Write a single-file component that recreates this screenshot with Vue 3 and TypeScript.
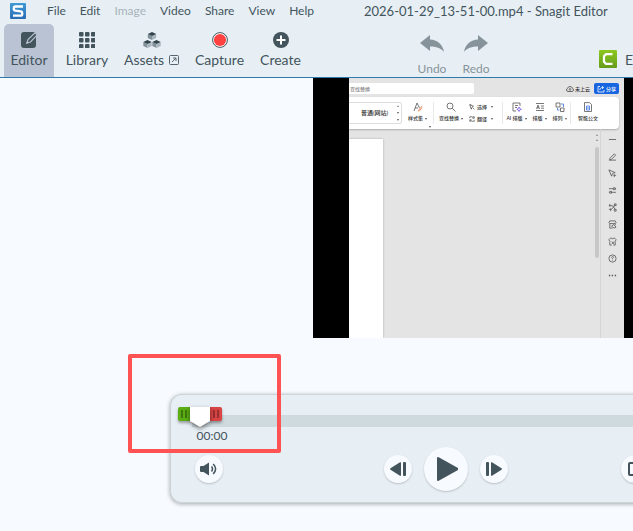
<script setup lang="ts">
import { ref } from 'vue'

interface MenuEntry { label: string; disabled?: boolean }

const menus: MenuEntry[] = [
  { label: 'File' }, { label: 'Edit' }, { label: 'Image', disabled: true },
  { label: 'Video' }, { label: 'Share' }, { label: 'View' }, { label: 'Help' },
]

const position = ref(0)

const sideIcons: string[] = [
  'M1 5h8',
  'M1 9h8M2 7l5-5 1.500 1.500-5 5H2z',
  'M1 1l7 3-3 1-1 3zM6 7h3M7 6v3',
  'M1 3h5M8 3h1M1 7h1M4 7h5M6 2h2v2H6zM2 6h2v2H2z',
  'M1 3h4l3 4M1 7h3l4-5M7 1h2v2H7zM7 7h2v2H7zM2 1v3M3 6v3',
  'M1 3l1-2h6l1 2-1 1H2zM2 4v5h3M4 7l2-2 3 3-2 1zM8 4v2',
  'M3 1l2 1 2-1 2 2-1 2v4H6M4 9H2V5L1 3l2-2M4 5l3 3M7 5L4 8',
  'M5 1a4 4 0 1 0 0 8a4 4 0 1 0 0-8M4 4c0-2 3-1 2 0L5 5v1M5 7v.5',
  'M1 5h1.500M4.200 5h1.500M7.500 5h1.500',
]
</script>

<template>
  <div class="app">
    <header class="header">
      <div class="menu-row">
        <svg class="logo" viewBox="0 0 16 16" aria-hidden="true">
          <defs>
            <linearGradient id="logoFill" x1="0" y1="0" x2="0" y2="1">
              <stop offset="0" stop-color="#3f9bd6" /><stop offset="1" stop-color="#2b6cb3" />
            </linearGradient>
          </defs>
          <rect width="16" height="16" rx="1" fill="url(#logoFill)" />
          <path d="M13 3.500H5.500Q3.800 3.500 3.800 5.200V6Q3.800 7.500 5.500 7.700L10.500 8.300Q12.200 8.500 12.200 10V11Q12.200 12.700 10.500 12.700H3" fill="none" stroke="#fff" stroke-width="2.300" />
        </svg>
        <nav class="menus" aria-label="Main menu">
          <button v-for="m in menus" :key="m.label" class="menu" :disabled="m.disabled">{{ m.label }}</button>
        </nav>
        <h1 class="title">2026-01-29_13-51-00.mp4 - Snagit Editor</h1>
      </div>

      <div class="tool-row">
        <div class="tabs">
          <button class="tab active">
            <svg width="18" height="16" viewBox="0 0 18 16" aria-hidden="true">
              <rect x="1" y="0" width="15" height="16" rx="3" fill="#43545c" />
              <path d="M7 11l1-3.500L15 .8l2.200 2L10.500 10z" fill="#43545c" stroke="#b9c3d3" stroke-width="1.200" />
              <path d="M6 12l1-2.500 1.600 1.600z" fill="#b9c3d3" />
            </svg>
            <span>Editor</span>
          </button>
          <button class="tab">
            <svg width="16" height="16" viewBox="0 0 16 16" fill="#43545c" aria-hidden="true">
              <template v-for="r in 3" :key="r">
                <rect v-for="c in 3" :key="c" :x="(c - 1) * 6" :y="(r - 1) * 6" width="4.500" height="4.500" rx="1" />
              </template>
            </svg>
            <span>Library</span>
          </button>
          <button class="tab">
            <svg width="18" height="16" viewBox="0 0 18 16" aria-hidden="true">
              <g v-for="p in [[4.5, 0], [0, 8], [9, 8]]" :key="p.join()" :transform="`translate(${p[0]} ${p[1]})`">
                <path d="M.3 2L4.500 4v4L.3 6z" fill="#82909a" />
                <path d="M8.700 2L4.500 4v4l4.200-2z" fill="#aab4bd" />
                <path d="M.3 2L4.500 0l4.200 2-4.200 2z" fill="#34454d" />
              </g>
            </svg>
            <span class="with-link">Assets
              <svg width="10" height="10" viewBox="0 0 10 10" fill="none" stroke="#56656d" aria-hidden="true">
                <rect x=".5" y=".5" width="9" height="9" rx="1" /><path d="M3 7l4-4M4 3h3v3" />
              </svg>
            </span>
          </button>
          <button class="tab">
            <svg width="16" height="16" viewBox="0 0 16 16" aria-hidden="true">
              <circle cx="8" cy="8" r="7.400" fill="#fff" stroke="#43545c" stroke-width="1" /><circle cx="8" cy="8" r="6.100" fill="#ff4141" />
            </svg>
            <span>Capture</span>
          </button>
          <button class="tab">
            <svg width="16" height="16" viewBox="0 0 16 16" aria-hidden="true">
              <circle cx="8" cy="8" r="8" fill="#43545c" /><path d="M8 3.500v9M3.500 8h9" stroke="#fff" stroke-width="2" />
            </svg>
            <span>Create</span>
          </button>
        </div>
        <div class="history">
          <button class="hist">
            <svg width="24" height="18" viewBox="0 0 24 18" aria-hidden="true">
              <path d="M0 8L10 0v4.500c7 0 13 5 14 12.500-3-4-8-5.500-14-5.500V16z" fill="#87939a" />
            </svg>
            <span>Undo</span>
          </button>
          <button class="hist">
            <svg width="24" height="18" viewBox="0 0 24 18" aria-hidden="true">
              <path d="M24 8L14 0v4.500C7 4.500 1 9.500 0 17c3-4 8-5.500 14-5.500V16z" fill="#87939a" />
            </svg>
            <span>Redo</span>
          </button>
        </div>
        <button class="external">
          <svg width="18" height="18" viewBox="0 0 18 18" aria-hidden="true">
            <defs>
              <linearGradient id="greenFill" x1="0" y1="0" x2="0" y2="1">
                <stop offset="0" stop-color="#8cc820" /><stop offset="1" stop-color="#669c1b" />
              </linearGradient>
            </defs>
            <rect width="18" height="18" rx="1" fill="url(#greenFill)" />
            <path d="M13.500 4.200H7L5 6.200v5.600l2 2h6.500" fill="none" stroke="#fff" stroke-width="2.200" />
          </svg>
          <span>E</span>
        </button>
      </div>
    </header>

    <main class="workspace">
      <section class="video" aria-label="Video preview">
        <div class="doc">
          <div class="doc-top">
            <input class="doc-search" type="text" placeholder="查找替换" aria-label="查找替换" />
            <div class="doc-account">
              <span class="cloud">
                <svg width="8" height="8" viewBox="0 0 8 8" fill="none" stroke="#333" stroke-width=".7" aria-hidden="true">
                  <path d="M2 6.500A1.700 1.700 0 0 1 1.700 3.200 2.400 2.400 0 0 1 6.300 3.200 1.700 1.700 0 0 1 6 6.500zM4 6V3.500M3 4.500l1-1 1 1" />
                </svg>未上云
              </span>
              <button class="share">
                <svg width="8" height="8" viewBox="0 0 8 8" fill="none" stroke="#fff" stroke-width=".8" aria-hidden="true">
                  <path d="M3 1.500H1v5.500h6V5M2.800 5C3 3 4 2.500 6 2.500M5 1l1.700 1.500L5 4" />
                </svg>分享
              </button>
            </div>
          </div>

          <div class="ribbon">
            <div class="gallery">
              <span>普通(网站)</span>
              <div class="spin"><i class="up"></i><i></i><i></i></div>
            </div>
            <button class="rib c-style">
              <svg width="10" height="10" viewBox="0 0 10 10" fill="none" stroke="#555" stroke-width=".8" aria-hidden="true">
                <path d="M1 9l3-8 2.500 5M2.200 6H5" /><path d="M5 9l4-5M6 9.500l3-4" stroke="#e07a4c" />
              </svg>
              <span>样式集<i></i></span>
              <i class="launcher"></i>
            </button>
            <button class="rib c-find">
              <svg width="10" height="10" viewBox="0 0 10 10" fill="none" stroke="#555" stroke-width=".8" aria-hidden="true">
                <circle cx="4" cy="4" r="3" /><path d="M6.200 6.200L9.500 9.500" />
              </svg>
              <span>查找替换<i></i></span>
            </button>
            <div class="rib-stack">
              <button class="rib-line">
                <svg width="6" height="6" viewBox="0 0 8 8" fill="none" stroke="#444" stroke-width=".9" aria-hidden="true"><path d="M1 1h2M1 1l5 2-2 1-1 3zM5 5l2 2" /></svg>选择<i></i>
              </button>
              <button class="rib-line">
                <svg width="6" height="6" viewBox="0 0 8 8" fill="none" stroke="#444" stroke-width=".9" aria-hidden="true"><path d="M1 3V1h3M7 5v2H4M5 1h2v2H5zM1 5h2v2H1z" /></svg>翻译<i></i>
              </button>
            </div>
            <button class="rib c-ai">
              <svg width="10" height="10" viewBox="0 0 10 10" fill="none" stroke="#555" stroke-width=".8" aria-hidden="true">
                <path d="M4 9H1V1h7v3M3 3.500h3M3 5.500h2" /><path d="M7 5l.7 1.700 1.700.6-1.700.7L7 9.500l-.7-1.500-1.500-.7 1.500-.6z" stroke="#7656e8" />
              </svg>
              <span>AI 排版<i></i></span>
            </button>
            <button class="rib c-layout">
              <svg width="10" height="10" viewBox="0 0 10 10" fill="none" stroke="#555" stroke-width=".8" aria-hidden="true">
                <path d="M1 1.500h8M1 8.500h8M1.500 7l1.500-4 1.500 4M2 5.800h2M6 4h3M6 6.200h3" />
              </svg>
              <span>排版<i></i></span>
            </button>
            <button class="rib c-arrange">
              <svg width="10" height="10" viewBox="0 0 10 10" fill="none" stroke="#555" stroke-width=".8" aria-hidden="true">
                <path d="M1 1h4v4H1zM5.500 6H9v3.500H5.500z" /><path d="M6 2h2.500v3M4.500 8H2.500V6" stroke="#3f6fe0" />
              </svg>
              <span>排列<i></i></span>
            </button>
            <button class="rib c-gov">
              <svg width="10" height="10" viewBox="0 0 10 10" fill="none" stroke="#555" stroke-width=".8" aria-hidden="true">
                <path d="M1.500.6h5L8.500 2.500v7h-7z" /><path d="M3.500 4h3v4h-3zM3.500 6h3" stroke="#3f6fe0" />
              </svg>
              <span>智能公文</span>
            </button>
          </div>

          <div class="doc-body">
            <div class="page"></div>
            <div class="scroll">
              <i class="up"></i><i class="up"></i>
              <div class="scroll-thumb"></div>
            </div>
            <aside class="side">
              <svg v-for="(d, i) in sideIcons" :key="i" width="9" height="9" viewBox="0 0 10 10" fill="none" stroke="#555" :stroke-width="i === 8 ? 1.6 : 0.9" aria-hidden="true">
                <path :d="d" />
              </svg>
            </aside>
          </div>
        </div>
      </section>

      <section class="player" aria-label="Playback controls">
        <div class="timeline">
          <button class="trim start" aria-label="Trim start"><i></i><i></i></button>
          <button class="trim end" aria-label="Trim end"><i></i><i></i></button>
          <input v-model.number="position" class="seek" type="range" min="0" max="100" aria-label="Playback position" />
        </div>
        <div class="time">00:00</div>
        <div class="controls">
          <button class="round" aria-label="Volume">
            <svg width="18" height="14" viewBox="0 0 18 14" aria-hidden="true">
              <path d="M1 4Q0 4 0 5v4q0 1 1 1h2.500L9 13.500V.5L3.500 4z" fill="#43545c" />
              <path d="M11.500 4.500Q13.500 7 11.500 9.500M13.200 2Q18 7 13.200 12" fill="none" stroke="#43545c" stroke-width="1.500" />
            </svg>
          </button>
          <div class="transport">
            <button class="round" aria-label="Previous frame">
              <svg width="16" height="14" viewBox="0 0 16 14" fill="#43545c" aria-hidden="true"><path d="M11 .8v12.400q0 .8-1 .5L.5 7.700q-.8-.7 0-1.400L10 .3q1-.4 1 .5z" /><rect x="13" width="3" height="14" rx="1" /></svg>
            </button>
            <button class="round play" aria-label="Play">
              <svg width="24" height="26" viewBox="0 0 24 26" fill="#43545c" aria-hidden="true"><path d="M3 2.200Q3 .4 4.700 1.200L24 12q1 1 0 2L4.700 24.800Q3 25.600 3 23.800z" /></svg>
            </button>
            <button class="round" aria-label="Next frame">
              <svg width="16" height="14" viewBox="0 0 16 14" fill="#43545c" aria-hidden="true"><rect width="3" height="14" rx="1" /><path d="M5 .8v12.400q0 .8 1 .5l9.500-6q.8-.7 0-1.400L6 .3Q5 -.1 5 .8z" /></svg>
            </button>
          </div>
          <button class="round extra" aria-label="Fit view">
            <svg width="14" height="14" viewBox="0 0 14 14" aria-hidden="true"><rect x="1" y="1" width="12" height="12" rx="1" fill="none" stroke="#43545c" stroke-width="2" /></svg>
          </button>
        </div>
      </section>

      <div class="highlight" aria-hidden="true"></div>
    </main>
  </div>
</template>

<style>
body { background: #f7fbff; }
</style>

<style scoped>
.app {
  position: relative;
  min-height: 100vh;
  overflow: hidden;
  background: #f7fbff;
  color: #43545c;
  font-family: Lato, "Noto Sans CJK SC", sans-serif;
}
button {
  border: 0;
  padding: 0;
  background: none;
  color: inherit;
  font: inherit;
  white-space: nowrap;
}
svg { display: block; flex: none; }
.header { background: #e7eff5; border-bottom: 1px solid #2d7baa; }
.menu-row { display: flex; align-items: center; height: 22px; padding: 0 10px; }
.logo { width: 16px; height: 16px; }
.menus { display: flex; gap: 14px; margin-left: 21px; font-size: 12px; line-height: 22px; }
.menu:disabled { color: #a9b3ba; }
.title { margin: 0 0 0 50px; font-size: 13px; font-weight: 400; line-height: 20px; white-space: nowrap; }
.tool-row { display: flex; height: 53px; margin-top: 2px; padding-left: 4px; }
.tabs { display: grid; grid-template-columns: 54px 58px 71px 65px 57px; }
.tab { display: flex; flex-direction: column; align-items: center; gap: 2px; padding-top: 8px; font-size: 14px; line-height: 20px; }
.tab.active { width: 50px; background: #b9c3d3; border-radius: 5px 5px 0 0; }
.with-link { display: flex; align-items: center; gap: 5px; }
.history { display: flex; margin-left: 101px; }
.hist { display: flex; flex-direction: column; align-items: center; width: 44px; gap: 7px; padding-top: 11px; font-size: 12px; line-height: 18px; color: #87939a; }
.external { display: flex; align-items: center; gap: 8px; margin-left: 101px; padding-top: 17px; font-size: 14px; }

.workspace { position: relative; }
.video { height: 260px; margin-left: 313px; padding: 0 9px 0 36px; background: #000; }
.doc { display: flex; flex-direction: column; height: 100%; overflow: hidden; background: #e4e4e4; color: #333; font-size: 5px; font-weight: 500; line-height: 8px; }
.doc-top { display: flex; justify-content: space-between; align-items: center; padding: 5px 5px 3px 0; }
.doc-search { width: 125px; height: 11px; box-sizing: border-box; border: 0; border-radius: 0 2px 2px 0; padding: 0 1px; background: #fff; font: inherit; }
.doc-search::placeholder { color: #888; }
.doc-account { display: flex; align-items: center; gap: 4px; }
.cloud, .share { display: flex; align-items: center; gap: 1px; }
.share { height: 11px; padding: 0 3px; border-radius: 2px; background: #1765e0; color: #fff; }
.ribbon {
  display: grid;
  grid-template-columns: 53px 31px 35px 34px 28px 19px 21px 35px;
  align-items: center;
  height: 32px;
  margin-right: 5px;
  border-radius: 0 4px 4px 0;
  background: #fff;
  box-shadow: 0 1px 2px #aaa;
}
.gallery { display: flex; align-items: center; justify-content: space-between; height: 20px; padding: 0 2px 0 12px; border: 1px solid #ddd; border-left: 0; border-radius: 0 3px 3px 0; font-size: 6px; }
.spin { display: flex; flex-direction: column; gap: 5px; }
i { display: inline-block; flex: none; border: 1px solid transparent; border-top: 2px solid #555; border-bottom: 0; margin-left: 2px; vertical-align: middle; }
i.up { border-top: 0; border-bottom: 2px solid #888; }
.rib { position: relative; display: flex; flex-direction: column; align-items: center; gap: 2px; padding-bottom: 2px; }
.launcher { position: absolute; right: 2px; bottom: -4px; }
.c-find, .c-ai, .c-gov { border-left: 1px solid #e8e8e8; }
.rib-stack { display: flex; flex-direction: column; gap: 4px; padding: 0 0 1px 1px; }
.rib-line { display: flex; align-items: center; gap: 2px; }
.doc-body { display: flex; flex: 1; }
.page { width: 34px; margin-top: 10px; background: #fff; box-shadow: 0 0 2px #aaa; }
.scroll { display: flex; flex-direction: column; align-items: center; gap: 3px; width: 7px; margin-left: auto; padding-top: 5px; }
.scroll i { margin: 0; }
.scroll-thumb { width: 4px; height: 111px; margin-top: 3px; border-radius: 2px; background: #c7c7c7; }
.side { display: flex; flex-direction: column; align-items: center; gap: 8px; width: 23px; padding-top: 6px; border-left: 1px solid #d4d4d4; }

.player {
  margin: 56px -89px 28px 170px;
  padding-top: 12px;
  padding-bottom: 11px;
  border: 1px solid #cdd4d8;
  border-right: 0;
  border-radius: 12px;
  background: #e7eff5;
  box-shadow: 0 1px 4px rgba(0, 0, 0, 0.35);
}
.timeline { position: relative; margin-left: 7px; height: 20px; }
.timeline::before { content: ""; position: absolute; inset: 8px 7px 0 14px; background: #cfdadf; }
.trim { position: absolute; top: 0; display: flex; align-items: center; justify-content: center; gap: 2px; width: 12px; height: 14px; box-shadow: 0 2px 3px rgba(0, 0, 0, 0.35); }
.trim i { width: 2px; height: 8px; margin: 0; border: 0; background: rgba(0, 0, 0, 0.3); }
.trim.start { left: 0; border-radius: 2px 0 0 2px; background: #5aad13; }
.trim.end { left: 32px; border-radius: 0 2px 2px 0; background: #d84444; }
.seek {
  position: absolute;
  left: 12px;
  width: calc(100% - 19px);
  height: 20px;
  margin: 0;
  appearance: none;
  background: none;
  pointer-events: none;
  filter: drop-shadow(0 2px 2px rgba(0, 0, 0, 0.5));
}
.seek::-webkit-slider-thumb {
  appearance: none;
  width: 20px;
  height: 20px;
  background: #fff;
  clip-path: polygon(0 0, 100% 0, 100% 70%, 50% 100%, 0 70%);
  pointer-events: auto;
}
.time { width: 82px; font-size: 12px; line-height: 18px; text-align: center; }
.controls { display: grid; grid-template-columns: 1fr auto 1fr; align-items: center; margin-top: 2px; padding: 0 26px 0 24px; }
.transport { display: flex; align-items: center; gap: 12px; }
.round { display: flex; align-items: center; justify-content: center; width: 28px; height: 28px; border-radius: 50%; background: #f7fbff; box-shadow: 0 1px 2px rgba(0, 0, 0, 0.2); }
.play { width: 44px; height: 44px; }
.extra { justify-self: end; margin-right: 47px; }
.highlight { position: absolute; left: 128px; top: 276px; width: 145px; height: 91px; border: 4px solid #ff5252; border-radius: 2px; }
</style>
